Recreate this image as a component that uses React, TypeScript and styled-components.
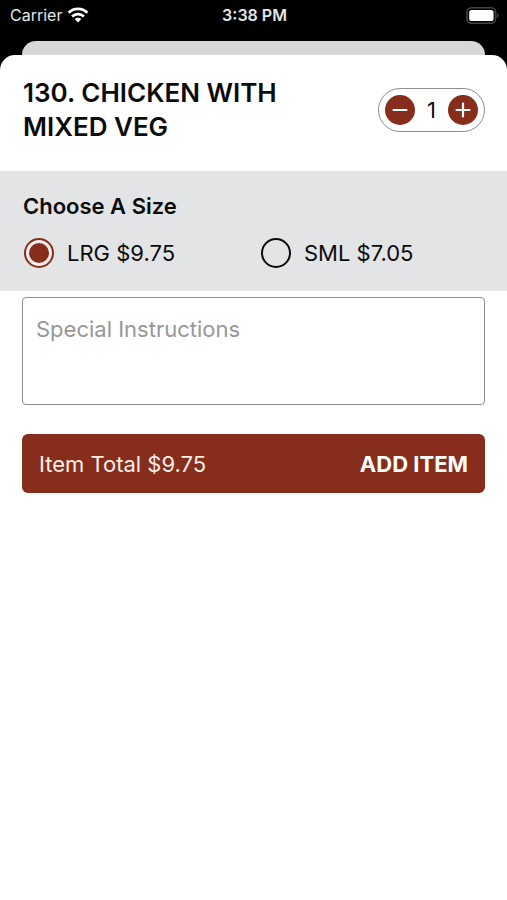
import React, { useState } from "react";
import styled, { createGlobalStyle } from "styled-components";

const brand = "#862d1c";
const ink = "#0b0b0b";

const GlobalStyle = createGlobalStyle`
  *, *::before, *::after { box-sizing: border-box; }
  html, body, #root { height: 100%; }
  body {
    margin: 0;
    background: #000;
    color: ${ink};
    font-family: Inter, "Liberation Sans", sans-serif;
    font-size: 22px;
  }
  button, textarea, input { font: inherit; color: inherit; }
`;

const Screen = styled.div`
  min-height: 100%;
  display: flex;
  flex-direction: column;
`;

const StatusBar = styled.header`
  display: grid;
  grid-template-columns: 1fr auto 1fr;
  align-items: center;
  height: 30px;
  padding: 0 8px 0 10px;
  color: #e6e6e6;
  font-size: 16px;
  line-height: 20px;
`;

const Carrier = styled.div`
  display: flex;
  align-items: center;
  gap: 5px;
`;

const Clock = styled.time`
  font-weight: 600;
`;

const BatteryIcon = styled.svg`
  justify-self: end;
`;

const BackCard = styled.div`
  height: 14px;
  margin: 11px 22px 0;
  border-radius: 14px 14px 0 0;
  background: #d8d8d8;
`;

const Sheet = styled.main`
  flex: 1;
  border-radius: 15px 15px 0 0;
  background: #fff;
`;

const ItemHeader = styled.div`
  display: flex;
  align-items: center;
  justify-content: space-between;
  gap: 24px;
  padding: 21px 22px 27px 23px;
`;

const ItemTitle = styled.h1`
  max-width: 300px;
  margin: 0;
  font-size: 26px;
  font-weight: 600;
  line-height: 34px;
`;

const Stepper = styled.div`
  flex: none;
  display: flex;
  align-items: center;
  height: 44px;
  padding: 0 6px;
  border: 1px solid #8e8e90;
  border-radius: 22px;
`;

const StepButton = styled.button`
  display: grid;
  place-items: center;
  width: 30px;
  height: 30px;
  padding: 0;
  border: 0;
  border-radius: 50%;
  background: ${brand};
  cursor: pointer;
`;

const Quantity = styled.output`
  min-width: 33px;
  text-align: center;
  line-height: 30px;
`;

const SizePanel = styled.section`
  padding: 20px 22px 22px 23px;
  background: #e3e4e6;
`;

const SizeTitle = styled.h2`
  margin: 0 0 16px;
  font-size: 22px;
  font-weight: 600;
  line-height: 30px;
`;

const SizeOptions = styled.div`
  display: grid;
  grid-template-columns: 1fr 1fr;
  gap: 12px;
`;

const SizeOption = styled.label`
  display: flex;
  align-items: center;
  gap: 12px;
  line-height: 32px;
  cursor: pointer;
`;

const Radio = styled.input`
  appearance: none;
  display: grid;
  place-items: center;
  width: 30px;
  height: 30px;
  margin: 0 1px;
  border: 2px solid ${ink};
  border-radius: 50%;

  &:checked {
    border-color: ${brand};
    background: #f3eceb;
  }

  &:checked::after {
    content: "";
    width: 20px;
    height: 20px;
    border-radius: 50%;
    background: ${brand};
  }
`;

const OrderForm = styled.form`
  display: flex;
  flex-direction: column;
  gap: 29px;
  padding: 6px 22px 24px;
`;

const Instructions = styled.textarea`
  display: block;
  width: 100%;
  height: 108px;
  padding: 16px 13px;
  border: 1px solid #8e8e90;
  border-radius: 4px;
  background: #fff;
  line-height: 30px;
  resize: none;

  &::placeholder {
    color: #979797;
    opacity: 1;
  }
`;

const AddButton = styled.button`
  display: flex;
  align-items: center;
  justify-content: space-between;
  height: 59px;
  padding: 0 17px;
  border: 0;
  border-radius: 6px;
  background: ${brand};
  color: #fbeeea;
  cursor: pointer;
`;

const AddLabel = styled.span`
  font-weight: 700;
  color: #fff;
`;

const sizes = [
  { id: "LRG", price: 9.75 },
  { id: "SML", price: 7.05 },
];

const money = (value: number) => `$${value.toFixed(2)}`;

function Wifi() {
  return (
    <svg width="22" height="16" viewBox="0 0 22 16" aria-label="Wi-Fi" role="img">
      <g fill="none" stroke="#fff" strokeWidth="2.8">
        <path d="M1.6 5.8a13.4 13.4 0 0 1 18.8 0" />
        <path d="M5.1 9.5a8.4 8.4 0 0 1 11.8 0" />
      </g>
      <path d="M11 15.4l-3.3-3.3a4.7 4.7 0 0 1 6.6 0z" fill="#fff" />
    </svg>
  );
}

function Battery() {
  return (
    <BatteryIcon width="33" height="17" viewBox="0 0 33 17" aria-label="Battery full" role="img">
      <rect x="1" y="0.8" width="28.6" height="15.4" rx="4.6" fill="none" stroke="#454545" strokeWidth="1.6" />
      <rect x="3.2" y="3" width="24.4" height="11" rx="2.6" fill="#fff" />
      <path d="M31 6v5c1-.4 1.6-1.4 1.6-2.5S32 6.4 31 6z" fill="#454545" />
    </BatteryIcon>
  );
}

function StepIcon({ plus }: { plus?: boolean }) {
  return (
    <svg width="16" height="16" viewBox="0 0 16 16" aria-hidden="true">
      <path
        d={plus ? "M1.5 8h13M8 1.5v13" : "M1.5 8h13"}
        fill="none"
        stroke="#fff"
        strokeWidth="2.2"
        strokeLinecap="round"
      />
    </svg>
  );
}

export default function App() {
  const [quantity, setQuantity] = useState(1);
  const [size, setSize] = useState("LRG");
  const [notes, setNotes] = useState("");
  const price = sizes.find((s) => s.id === size)!.price;

  return (
    <Screen>
      <GlobalStyle />
      <StatusBar>
        <Carrier>
          Carrier
          <Wifi />
        </Carrier>
        <Clock>3:38 PM</Clock>
        <Battery />
      </StatusBar>
      <BackCard />
      <Sheet>
        <ItemHeader>
          <ItemTitle>130. CHICKEN WITH MIXED VEG</ItemTitle>
          <Stepper role="group" aria-label="Quantity">
            <StepButton
              type="button"
              aria-label="Decrease quantity"
              onClick={() => setQuantity(Math.max(1, quantity - 1))}
            >
              <StepIcon />
            </StepButton>
            <Quantity>{quantity}</Quantity>
            <StepButton
              type="button"
              aria-label="Increase quantity"
              onClick={() => setQuantity(quantity + 1)}
            >
              <StepIcon plus />
            </StepButton>
          </Stepper>
        </ItemHeader>
        <SizePanel>
          <SizeTitle id="size-title">Choose A Size</SizeTitle>
          <SizeOptions role="radiogroup" aria-labelledby="size-title">
            {sizes.map((s) => (
              <SizeOption key={s.id}>
                <Radio
                  type="radio"
                  name="size"
                  value={s.id}
                  checked={size === s.id}
                  onChange={() => setSize(s.id)}
                />
                <span>{`${s.id} ${money(s.price)}`}</span>
              </SizeOption>
            ))}
          </SizeOptions>
        </SizePanel>
        <OrderForm onSubmit={(e) => e.preventDefault()}>
          <Instructions
            aria-label="Special Instructions"
            placeholder="Special Instructions"
            value={notes}
            onChange={(e) => setNotes(e.target.value)}
          />
          <AddButton type="submit">
            <span>{`Item Total ${money(price * quantity)}`}</span>
            <AddLabel>ADD ITEM</AddLabel>
          </AddButton>
        </OrderForm>
      </Sheet>
    </Screen>
  );
}
